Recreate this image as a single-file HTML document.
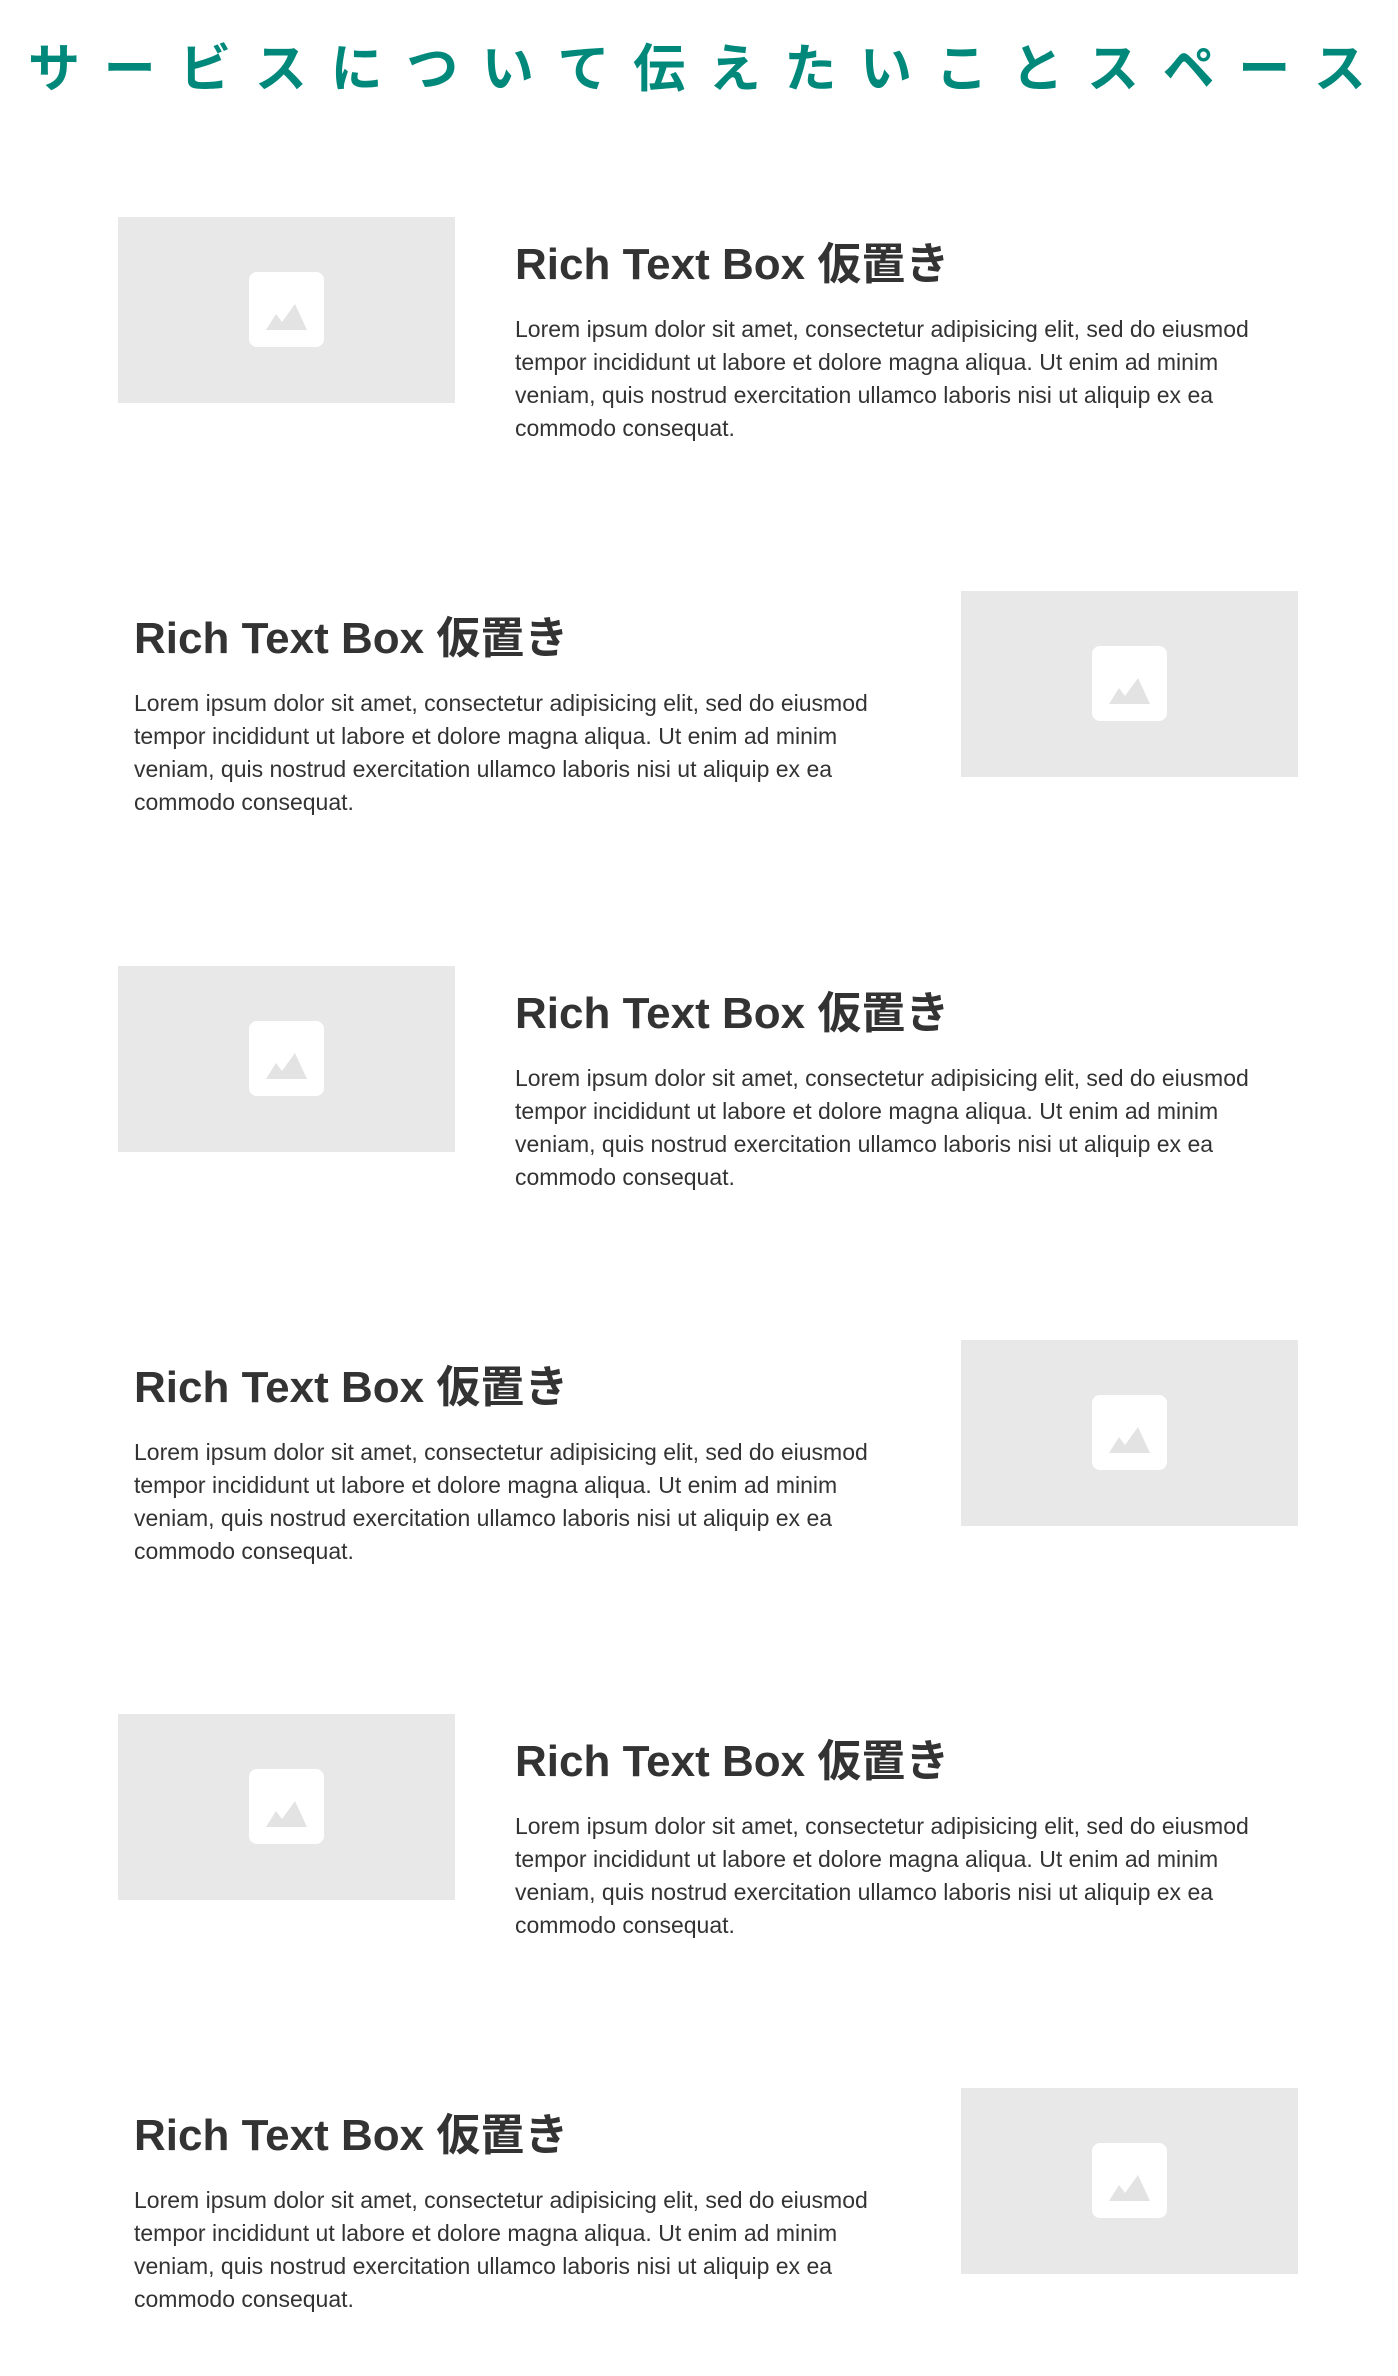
<!DOCTYPE html>
<html><head><meta charset="utf-8"><style>
body{margin:0;width:1398px;height:2376px;background:#fff;font-family:"Liberation Sans","Noto Sans CJK JP",sans-serif;position:relative;overflow:hidden}
.t{position:absolute;left:28px;top:28px;width:1338px;display:flex;justify-content:space-between;font-size:52px;font-weight:bold;color:#00897b;line-height:74px;white-space:nowrap;font-family:"Noto Sans CJK JP",sans-serif}
.img{position:absolute;width:337px;height:186px;background:#e8e8e8}
.ic{position:absolute;left:131px;top:55px;width:75px;height:75px;background:#fff;border-radius:8px}
.h{position:absolute;font-size:44px;color:#333;font-weight:bold;line-height:56px;white-space:nowrap;font-family:"Liberation Sans","Noto Sans CJK JP",sans-serif}
.p{position:absolute;font-size:23px;color:#333;line-height:33px;width:800px;white-space:nowrap}
</style></head><body>
<div class="t"><span>サ</span><span>ー</span><span>ビ</span><span>ス</span><span>に</span><span>つ</span><span>い</span><span>て</span><span>伝</span><span>え</span><span>た</span><span>い</span><span>こ</span><span>と</span><span>ス</span><span>ペ</span><span>ー</span><span>ス</span></div>

<div class="img" style="left:118px;top:217px"><div class="ic"><svg width="75" height="75" viewBox="0 0 75 75"><path d="M17 58 L27 42 L33 50 L46 32 L58 58 Z" fill="#e3e3e3"/></svg></div></div>
<div class="h" style="left:515px;top:237px">Rich Text Box 仮置き</div>
<div class="p" style="left:515px;top:313px">Lorem ipsum dolor sit amet, consectetur adipisicing elit, sed do eiusmod<br>tempor incididunt ut labore et dolore magna aliqua. Ut enim ad minim<br>veniam, quis nostrud exercitation ullamco laboris nisi ut aliquip ex ea<br>commodo consequat.</div>

<div class="img" style="left:961px;top:591px"><div class="ic"><svg width="75" height="75" viewBox="0 0 75 75"><path d="M17 58 L27 42 L33 50 L46 32 L58 58 Z" fill="#e3e3e3"/></svg></div></div>
<div class="h" style="left:134px;top:611px">Rich Text Box 仮置き</div>
<div class="p" style="left:134px;top:687px">Lorem ipsum dolor sit amet, consectetur adipisicing elit, sed do eiusmod<br>tempor incididunt ut labore et dolore magna aliqua. Ut enim ad minim<br>veniam, quis nostrud exercitation ullamco laboris nisi ut aliquip ex ea<br>commodo consequat.</div>

<div class="img" style="left:118px;top:966px"><div class="ic"><svg width="75" height="75" viewBox="0 0 75 75"><path d="M17 58 L27 42 L33 50 L46 32 L58 58 Z" fill="#e3e3e3"/></svg></div></div>
<div class="h" style="left:515px;top:986px">Rich Text Box 仮置き</div>
<div class="p" style="left:515px;top:1062px">Lorem ipsum dolor sit amet, consectetur adipisicing elit, sed do eiusmod<br>tempor incididunt ut labore et dolore magna aliqua. Ut enim ad minim<br>veniam, quis nostrud exercitation ullamco laboris nisi ut aliquip ex ea<br>commodo consequat.</div>

<div class="img" style="left:961px;top:1340px"><div class="ic"><svg width="75" height="75" viewBox="0 0 75 75"><path d="M17 58 L27 42 L33 50 L46 32 L58 58 Z" fill="#e3e3e3"/></svg></div></div>
<div class="h" style="left:134px;top:1360px">Rich Text Box 仮置き</div>
<div class="p" style="left:134px;top:1436px">Lorem ipsum dolor sit amet, consectetur adipisicing elit, sed do eiusmod<br>tempor incididunt ut labore et dolore magna aliqua. Ut enim ad minim<br>veniam, quis nostrud exercitation ullamco laboris nisi ut aliquip ex ea<br>commodo consequat.</div>

<div class="img" style="left:118px;top:1714px"><div class="ic"><svg width="75" height="75" viewBox="0 0 75 75"><path d="M17 58 L27 42 L33 50 L46 32 L58 58 Z" fill="#e3e3e3"/></svg></div></div>
<div class="h" style="left:515px;top:1734px">Rich Text Box 仮置き</div>
<div class="p" style="left:515px;top:1810px">Lorem ipsum dolor sit amet, consectetur adipisicing elit, sed do eiusmod<br>tempor incididunt ut labore et dolore magna aliqua. Ut enim ad minim<br>veniam, quis nostrud exercitation ullamco laboris nisi ut aliquip ex ea<br>commodo consequat.</div>

<div class="img" style="left:961px;top:2088px"><div class="ic"><svg width="75" height="75" viewBox="0 0 75 75"><path d="M17 58 L27 42 L33 50 L46 32 L58 58 Z" fill="#e3e3e3"/></svg></div></div>
<div class="h" style="left:134px;top:2108px">Rich Text Box 仮置き</div>
<div class="p" style="left:134px;top:2184px">Lorem ipsum dolor sit amet, consectetur adipisicing elit, sed do eiusmod<br>tempor incididunt ut labore et dolore magna aliqua. Ut enim ad minim<br>veniam, quis nostrud exercitation ullamco laboris nisi ut aliquip ex ea<br>commodo consequat.</div>
</body></html>
